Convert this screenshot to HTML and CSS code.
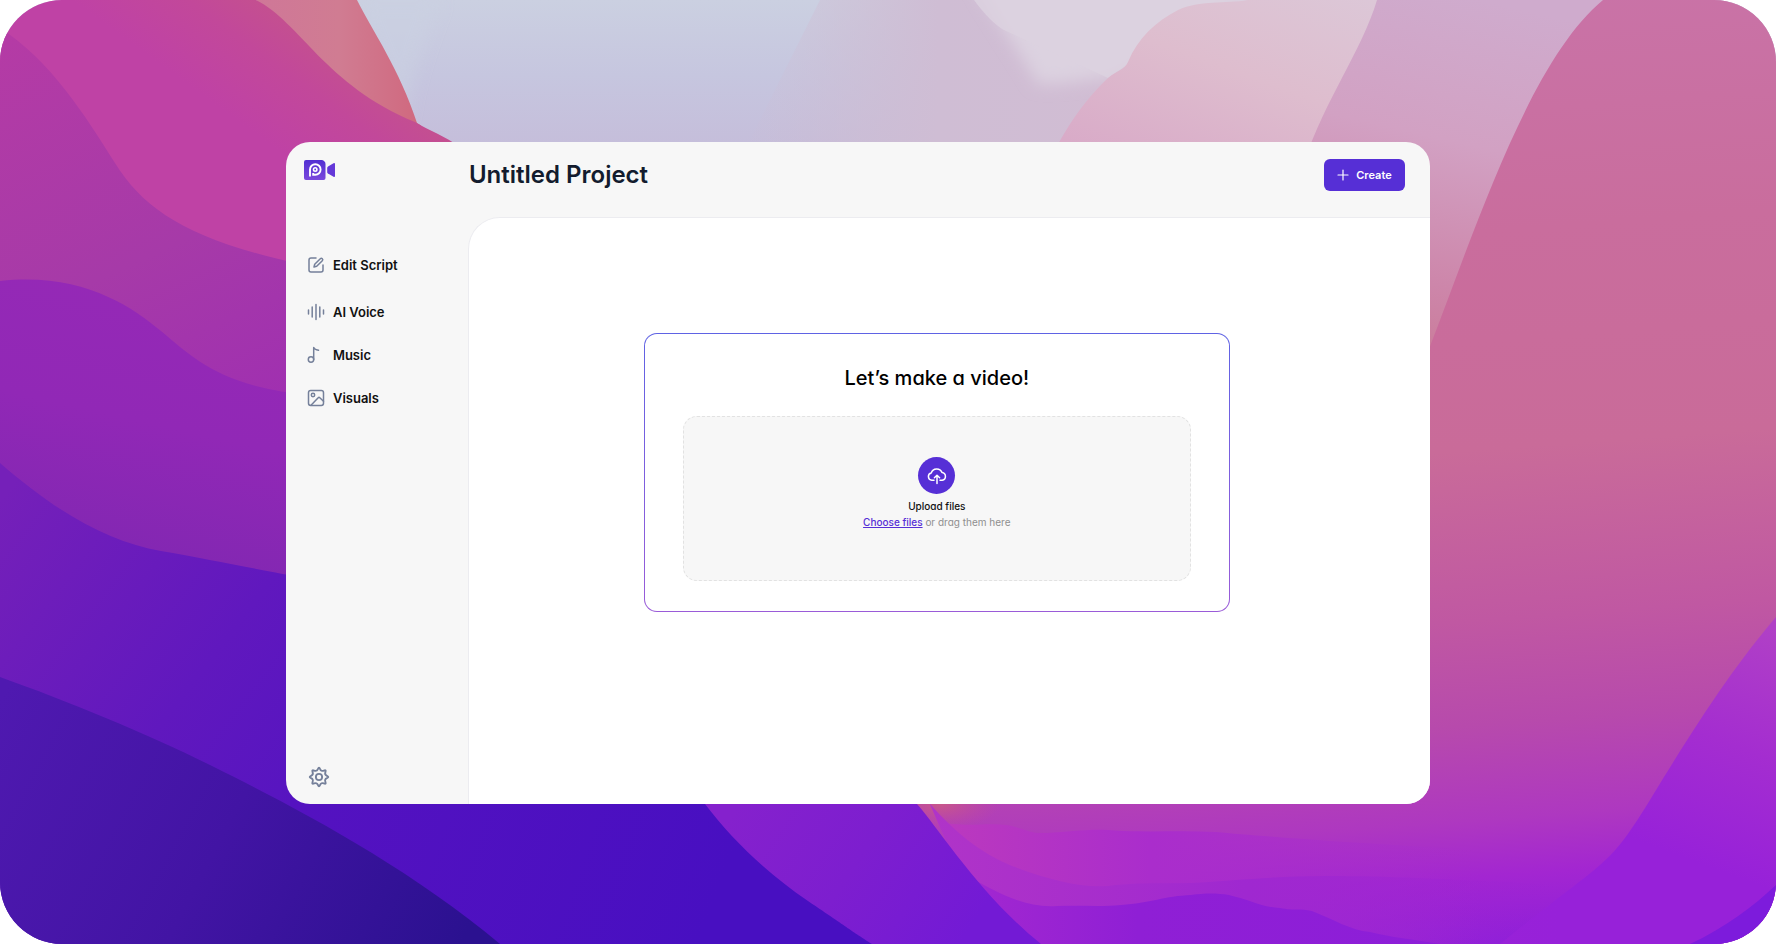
FILE: index.html
```html
<!DOCTYPE html>
<html lang="en">
<head>
    <meta charset="UTF-8">
    <meta name="viewport" content="width=device-width, initial-scale=1.0">
    <title>Untitled Project</title>
    <link rel="stylesheet" href="styles.css">
</head>
<body>

    <div class="desktop">
        <svg class="wallpaper" viewBox="0 0 1776 944" preserveAspectRatio="none" aria-hidden="true">
            <defs>
                <linearGradient id="sky" x1="0" y1="0" x2="0" y2="1">
                    <stop offset="0" stop-color="#cbd0e1"/><stop offset="0.08" stop-color="#c6c6df"/><stop offset="0.16" stop-color="#c5bdda"/>
                </linearGradient>
                <linearGradient id="dusk" x1="0" y1="0" x2="1" y2="0">
                    <stop offset="0" stop-color="#cebcd2" stop-opacity="0"/><stop offset="0.3" stop-color="#cfbdd4"/><stop offset="1" stop-color="#d4bdd2"/>
                </linearGradient>
                <linearGradient id="hill" x1="1" y1="0" x2="0.2" y2="1">
                    <stop offset="0" stop-color="#dcc8d8"/><stop offset="0.5" stop-color="#debdce"/><stop offset="1" stop-color="#d9abc8"/>
                </linearGradient>
                <linearGradient id="haze" gradientUnits="userSpaceOnUse" x1="1480" y1="0" x2="1400" y2="350">
                    <stop offset="0" stop-color="#cfabcd"/><stop offset="0.4" stop-color="#d2a1c3"/><stop offset="0.8" stop-color="#cd86aa"/><stop offset="1" stop-color="#ca7c9a"/>
                </linearGradient>
                <linearGradient id="dome" gradientUnits="userSpaceOnUse" x1="1400" y1="0" x2="1470" y2="944">
                    <stop offset="0" stop-color="#c973a7"/><stop offset="0.25" stop-color="#c96d9d"/><stop offset="0.48" stop-color="#c96b99"/><stop offset="0.66" stop-color="#c058a2"/><stop offset="0.77" stop-color="#b74aac"/><stop offset="0.87" stop-color="#ae38c0"/><stop offset="0.93" stop-color="#a326d1"/><stop offset="1" stop-color="#8f1fd9"/>
                </linearGradient>
                <linearGradient id="wedge" gradientUnits="userSpaceOnUse" x1="1776" y1="630" x2="1690" y2="860">
                    <stop offset="0" stop-color="#b040c6"/><stop offset="0.5" stop-color="#a42dd0"/><stop offset="1" stop-color="#9721d9"/>
                </linearGradient>
                <linearGradient id="coral" x1="0" y1="0" x2="1" y2="0">
                    <stop offset="0" stop-color="#cf7798"/><stop offset="0.5" stop-color="#d07c92"/><stop offset="1" stop-color="#d0687e"/>
                </linearGradient>
                <linearGradient id="magenta" gradientUnits="userSpaceOnUse" x1="330" y1="20" x2="250" y2="130">
                    <stop offset="0" stop-color="#c5548a"/><stop offset="0.5" stop-color="#c2489a"/><stop offset="1" stop-color="#bf42a5"/>
                </linearGradient>
                <linearGradient id="plum" x1="0" y1="0" x2="0.3" y2="1">
                    <stop offset="0" stop-color="#b53ba5"/><stop offset="0.6" stop-color="#a63aa8"/><stop offset="1" stop-color="#a030b0"/>
                </linearGradient>
                <linearGradient id="orchid" gradientUnits="userSpaceOnUse" x1="190" y1="290" x2="130" y2="560">
                    <stop offset="0" stop-color="#9529b6"/><stop offset="0.5" stop-color="#9128b6"/><stop offset="1" stop-color="#8227b2"/>
                </linearGradient>
                <linearGradient id="violet" gradientUnits="userSpaceOnUse" x1="0" y1="500" x2="420" y2="820">
                    <stop offset="0" stop-color="#7520b9"/><stop offset="0.5" stop-color="#6018be"/><stop offset="1" stop-color="#5012c2"/>
                </linearGradient>
                <linearGradient id="deep" gradientUnits="userSpaceOnUse" x1="300" y1="804" x2="700" y2="944">
                    <stop offset="0" stop-color="#5412c0"/><stop offset="1" stop-color="#480fc1"/>
                </linearGradient>
                <linearGradient id="night" gradientUnits="userSpaceOnUse" x1="0" y1="700" x2="460" y2="944">
                    <stop offset="0" stop-color="#4f19b0"/><stop offset="0.5" stop-color="#4214a4"/><stop offset="1" stop-color="#2b1190"/>
                </linearGradient>
                <linearGradient id="ridge" gradientUnits="userSpaceOnUse" x1="740" y1="800" x2="960" y2="944">
                    <stop offset="0" stop-color="#8521cd"/><stop offset="0.5" stop-color="#7d1ecf"/><stop offset="1" stop-color="#731ad5"/>
                </linearGradient>
                <linearGradient id="waveA" x1="0" y1="0" x2="1" y2="0">
                    <stop offset="0" stop-color="#bc3abd"/><stop offset="0.4" stop-color="#aa2dcc"/><stop offset="1" stop-color="#a52ccf" stop-opacity="0"/>
                </linearGradient>
                <linearGradient id="waveB" x1="0" y1="0" x2="1" y2="0">
                    <stop offset="0" stop-color="#b034c8"/><stop offset="0.5" stop-color="#9f28d0"/><stop offset="1" stop-color="#9a22d4" stop-opacity="0"/>
                </linearGradient>
                <linearGradient id="waveC" x1="0" y1="0" x2="1" y2="0">
                    <stop offset="0" stop-color="#a227d0"/><stop offset="0.35" stop-color="#8f1fd5"/><stop offset="1" stop-color="#8d1ed8"/>
                </linearGradient>
                <radialGradient id="ember">
                    <stop offset="0" stop-color="#c8588a"/><stop offset="1" stop-color="#c0489c" stop-opacity="0"/>
                </radialGradient>
                <filter id="soft" x="-20%" y="-20%" width="140%" height="140%"><feGaussianBlur stdDeviation="8"/></filter>
            </defs>

            <!-- sky -->
            <rect width="1776" height="944" fill="url(#sky)"/>
            <path d="M356 0H440C420 50 408 90 405 125Z" fill="#cbd1e2" opacity="0.6" filter="url(#soft)"/>
            <path d="M820 0H1400V160H740Z" fill="url(#dusk)"/>
            <path d="M974 -20C990 10 1025 60 1038 84C1065 84 1090 80 1115 76L1260 -20Z" fill="#dcd2e0" filter="url(#soft)"/>
            <path d="M974 0C985 15 995 25 1004 30L1108 78L1124 67L1248 0Z" fill="#dcd2e0" opacity="0.8"/>
            <path d="M1050 160C1065 130 1080 105 1108 78C1118 70 1124 70 1128 62C1138 38 1155 22 1178 10C1200 0 1225 4 1248 0H1400V160Z" fill="url(#hill)"/>
            <path d="M1377 0C1362 50 1325 100 1305 160V944H1776V0Z" fill="url(#haze)"/>

            <!-- right hills -->
            <path d="M1603 0C1530 60 1475 230 1429 349L900 800V944H1776V0Z" fill="url(#dome)"/>
            <path d="M1776 617C1735 665 1700 718 1653 795S1610 855 1500 944H1776Z" fill="url(#wedge)"/>
            <path d="M1776 885C1755 905 1725 928 1690 944H1776Z" fill="#7d1bdc"/>

            <!-- waves under the window -->
            <ellipse cx="940" cy="804" rx="60" ry="26" fill="url(#ember)"/>
            <path d="M930 804C940 815 944 824 952 824C975 826 990 823 1006 825C1025 828 1028 834 1047 833C1070 832 1085 829 1108 830C1145 833 1180 830 1216 832C1260 836 1330 842 1480 850V944H990Z" fill="url(#waveA)"/>
            <path d="M930 804C955 832 980 853 1012 866C1050 880 1080 888 1108 886C1140 882 1165 884 1191 883C1240 880 1280 876 1325 876C1400 876 1450 880 1560 884V944H990Z" fill="url(#waveB)"/>
            <path d="M975 880C1005 897 1030 908 1057 906C1080 905 1100 907 1121 905C1150 903 1165 896 1191 895C1205 893 1217 893 1229 895C1250 900 1262 907 1280 908C1295 911 1300 908 1312 911C1335 920 1350 930 1370 932C1390 937 1410 939 1440 944H1020Z" fill="url(#waveC)"/>
            <path d="M650 760H880L917 804C940 830 980 895 1041 944H650Z" fill="url(#ridge)"/>

            <!-- left hills -->
            <path d="M256 0H357C372 30 400 70 417 123C440 135 380 140 330 100Z" fill="url(#coral)"/>
            <path d="M0 0H256C300 22 325 85 415 122C430 131 445 136 460 147V400H0Z" fill="url(#magenta)"/>
            <path d="M0 28C50 60 85 115 115 163S190 240 300 264V480H0Z" fill="url(#plum)"/>
            <path d="M0 281C80 272 130 305 161 331S220 385 300 394V640H0Z" fill="url(#orchid)"/>
            <path d="M0 463C60 515 110 542 161 551S240 566 300 577V944H0Z" fill="url(#violet)"/>
            <path d="M290 780H690L705 804C730 837 765 872 808 901S850 930 872 944H290Z" fill="url(#deep)"/>
            <path d="M0 677C70 702 150 735 214 767S400 860 500 944H0Z" fill="url(#night)"/>
        </svg>

        <div class="window">
            <aside class="sidebar">
                <svg class="logo" viewBox="0 0 31 20" role="img" aria-label="Logo">
                    <defs>
                        <linearGradient id="brand" x1="0" y1="0" x2="0" y2="1">
                            <stop offset="0" stop-color="#5230d2"/><stop offset="1" stop-color="#7a48dc"/>
                        </linearGradient>
                    </defs>
                    <path d="M2 0H18C20 0.500 21.500 2 21.500 4V18A2 2 0 0 1 19.500 20H2A2 2 0 0 1 0 18V2A2 2 0 0 1 2 0Z" fill="url(#brand)"/>
                    <path d="M24 6.500L29.500 3.200Q31 2.600 31 4V16Q31 17.400 29.500 16.800L24 13.500Q23.200 13 23.200 12V8Q23.200 7 24 6.500Z" fill="#6438d8"/>
                    <path d="M6 16.500V9.500A5.300 5.300 0 1 1 11.300 14.800H9.200V13" fill="none" stroke="#fff" stroke-width="1.900"/>
                    <circle cx="11.200" cy="9.500" r="1.700" fill="none" stroke="#fff" stroke-width="1.600"/>
                </svg>

                <nav class="menu">
                    <a class="menu-item menu-item-first" href="#script">
                        <svg class="icon" viewBox="0 0 18 18">
                            <path d="M9 2H4A2 2 0 0 0 2 4V14A2 2 0 0 0 4 16H14A2 2 0 0 0 16 14V9"/>
                            <path d="M7 11L7.700 8.300L13.300 2.700A1.400 1.400 0 0 1 15.300 4.700L9.700 10.300Z"/>
                        </svg>
                        Edit Script
                    </a>
                    <a class="menu-item" href="#voice">
                        <svg class="icon" viewBox="0 0 18 18">
                            <path d="M1.500 7V11M5.200 4V14M9 1.500V16.500M12.800 4V14M16.500 7V11"/>
                        </svg>
                        AI Voice
                    </a>
                    <a class="menu-item" href="#music">
                        <svg class="icon" viewBox="0 0 18 18">
                            <circle cx="4" cy="13.500" r="2.700"/>
                            <path d="M6.700 13.500V1.500Q7.500 3.500 11.500 4.300"/>
                        </svg>
                        Music
                    </a>
                    <a class="menu-item" href="#visuals">
                        <svg class="icon" viewBox="0 0 18 18">
                            <rect x="1.500" y="1.500" width="15" height="15" rx="2.200"/>
                            <circle cx="6" cy="6" r="1.700"/>
                            <path d="M4 16.300L11.200 8.700Q12 8 12.800 8.700L16.500 12.300"/>
                        </svg>
                        Visuals
                    </a>
                </nav>

                <button class="settings" type="button" aria-label="Settings">
                    <svg class="icon icon-large" viewBox="0 0 24 24">
                        <circle cx="12" cy="12" r="3.400"/>
                        <path d="M10.800 3.300Q12 .4 13.200 3.300T17.300 5T19 6.700T20.700 10.800T20.700 13.200T19 17.300T17.300 19T13.200 20.700T10.800 20.700T6.700 19T5 17.300T3.300 13.200T3.300 10.800T5 6.700T6.700 5T10.800 3.300Z"/>
                    </svg>
                </button>
            </aside>

            <header class="topbar">
                <h1 class="project-name">Untitled Project</h1>
                <button class="create" type="button">
                    <svg class="plus" viewBox="0 0 12 12"><path d="M6 1V11M1 6H11"/></svg>
                    Create
                </button>
            </header>

            <main class="canvas">
                <section class="card">
                    <h2 class="card-title">Let’s make a video!</h2>
                    <div class="dropzone">
                        <span class="upload-icon">
                            <svg class="cloud" viewBox="0 0 20 18">
                                <path d="M7 13.200H4.800A3.700 3.700 0 0 1 4.300 5.900A5.700 5.700 0 0 1 15 5.400A3.950 3.950 0 0 1 15.200 13.200H13"/>
                                <path d="M10 16.500V8.500M7.400 10.800L10 8.200L12.600 10.800"/>
                            </svg>
                        </span>
                        <p class="upload-title">Upload files</p>
                        <p class="upload-hint"><a class="choose" href="#upload">Choose files</a> or drag them here</p>
                    </div>
                </section>
            </main>
        </div>
    </div>

</body>
</html>
```
FILE: styles.css
```css
* {
    box-sizing: border-box;
}

body {
    margin: 0;
    background-color: #ffffff;
    font-family: "Inter", sans-serif;
    color: #111111;
}

h1, h2, p {
    margin: 0;
}

button {
    font-family: inherit;
    border: none;
    cursor: pointer;
}

.desktop {
    position: relative;
    display: flex;
    min-height: 100vh;
    padding: 142px 19.5% 140px 16.1%;
    border-radius: 62px;
    overflow: hidden;
}

.wallpaper {
    position: absolute;
    inset: 0;
    width: 100%;
    height: 100%;
}

/* app window */
.window {
    position: relative;
    flex: 1;
    display: grid;
    grid-template-columns: 182px 1fr;
    grid-template-rows: auto 1fr;
    border-radius: 24px;
    background-color: #f7f7f7;
    overflow: hidden;
}

/* sidebar */
.sidebar {
    grid-row: span 2;
    display: flex;
    flex-direction: column;
    align-items: flex-start;
    padding: 18px 18px 16px;
}

.logo {
    width: 31px;
    height: 20px;
}

.menu {
    display: flex;
    flex-direction: column;
    gap: 23px;
    margin-top: 75px;
    padding-left: 3px;
}

.menu-item {
    display: flex;
    align-items: center;
    gap: 8px;
    line-height: 20px;
    font-size: 13px;
    font-weight: 600;
    color: #111111;
    text-decoration: none;
}

.menu-item-first {
    margin-bottom: 4px;
}

.icon {
    width: 18px;
    height: 18px;
    fill: none;
    stroke: #75809a;
    stroke-width: 1.5;
    stroke-linecap: round;
    stroke-linejoin: round;
}

.icon-large {
    display: block;
    width: 22px;
    height: 22px;
    stroke-width: 2;
}

.settings {
    margin-top: auto;
    margin-left: 4px;
    padding: 0;
    background: none;
}

/* top bar */
.topbar {
    display: flex;
    justify-content: space-between;
    align-items: center;
    padding: 17px 25px 26px 1px;
}

.project-name {
    font-size: 24px;
    line-height: 32px;
    font-weight: 600;
    color: #131c2e;
}

.create {
    display: flex;
    align-items: center;
    gap: 7px;
    height: 32px;
    padding: 0 13px;
    border-radius: 6px;
    background-color: #562fd6;
    color: #ffffff;
    font-size: 11px;
    font-weight: 600;
}

.plus {
    width: 12px;
    height: 12px;
    fill: none;
    stroke: #ffffff;
    stroke-width: 1.2;
    stroke-linecap: round;
}

/* work area */
.canvas {
    display: flex;
    justify-content: center;
    align-items: flex-start;
    padding: 115px 25px 40px 0;
    border-top: 1px solid #ececf0;
    border-left: 1px solid #ececf0;
    border-top-left-radius: 32px;
    background-color: #ffffff;
}

.card {
    width: 586px;
    padding: 29px 38px 30px;
    border: 1px solid transparent;
    border-radius: 13px;
    background: linear-gradient(#ffffff, #ffffff) padding-box,
                linear-gradient(#5f63e4, #9a5bd8) border-box;
    text-align: center;
    font-feature-settings: "cv11";
}

.card-title {
    margin-bottom: 23px;
    font-size: 20px;
    line-height: 30px;
    font-weight: 500;
    color: #000000;
}

.dropzone {
    display: flex;
    flex-direction: column;
    align-items: center;
    padding: 40px 20px 50px;
    border: 1px dashed #e2e2e2;
    border-radius: 14px;
    background-color: #f7f7f7;
    font-size: 10px;
    line-height: 16px;
}

.upload-icon {
    display: flex;
    justify-content: center;
    align-items: center;
    width: 37px;
    height: 37px;
    margin-bottom: 4px;
    border-radius: 50%;
    background-color: #562fd6;
}

.cloud {
    width: 20px;
    height: 18px;
    fill: none;
    stroke: #ffffff;
    stroke-width: 1.5;
    stroke-linecap: round;
    stroke-linejoin: round;
}

.upload-title {
    font-weight: 500;
}

.upload-hint {
    color: #8f8f8f;
}

.choose {
    font-weight: 500;
    color: #562fd6;
}
```
